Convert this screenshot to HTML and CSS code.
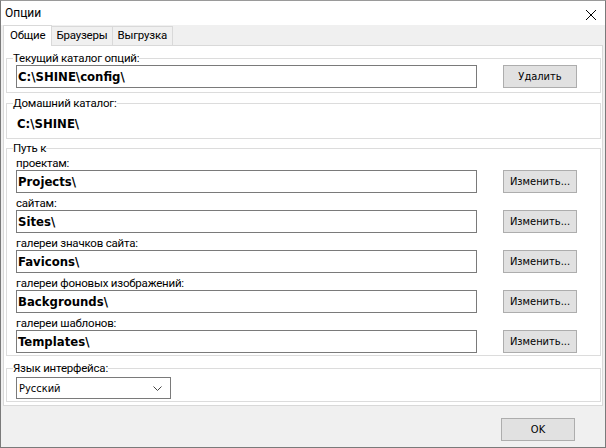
FILE: index.html
```html
<!DOCTYPE html>
<html lang="ru">
<head>
<meta charset="utf-8">
<title>Опции</title>
<link rel="stylesheet" href="styles.css">
</head>
<body>
<div class="window">
  <div class="titlebar">
    <span class="title">Опции</span>
    <svg class="close" width="12" height="12" viewBox="0 0 12 12"><path d="M1 1 L11 11 M11 1 L1 11" stroke="#000" stroke-width="1" fill="none"/></svg>
  </div>
  <div class="tabs">
    <div class="tab active">Общие</div>
    <div class="tab">Браузеры</div>
    <div class="tab">Выгрузка</div>
  </div>
  <div class="panel">
    <fieldset class="group g-current">
      <legend>Текущий каталог опций:</legend>
      <div class="row">
        <div class="field">C:\SHINE\config\</div>
        <button class="btn">Удалить</button>
      </div>
    </fieldset>
    <fieldset class="group g-home">
      <legend>Домашний каталог:</legend>
      <div class="static">C:\SHINE\</div>
    </fieldset>
    <fieldset class="group g-paths">
      <legend>Путь к</legend>
      <div class="label">проектам:</div>
      <div class="row"><div class="field">Projects\</div><button class="btn">Изменить...</button></div>
      <div class="label">сайтам:</div>
      <div class="row"><div class="field">Sites\</div><button class="btn">Изменить...</button></div>
      <div class="label">галереи значков сайта:</div>
      <div class="row"><div class="field">Favicons\</div><button class="btn">Изменить...</button></div>
      <div class="label">галереи фоновых изображений:</div>
      <div class="row"><div class="field">Backgrounds\</div><button class="btn">Изменить...</button></div>
      <div class="label">галереи шаблонов:</div>
      <div class="row"><div class="field">Templates\</div><button class="btn">Изменить...</button></div>
    </fieldset>
    <fieldset class="group g-lang">
      <legend>Язык интерфейса:</legend>
      <div class="select">
        <span>Русский</span>
        <svg width="9" height="5" viewBox="0 0 9 5"><path d="M0.5 0.5 L4.5 4.5 L8.5 0.5" stroke="#444" stroke-width="1" fill="none"/></svg>
      </div>
    </fieldset>
  </div>
  <div class="footer">
    <button class="btn ok">OK</button>
  </div>
</div>
</body>
</html>
```
FILE: styles.css
```css
html, body {
  margin: 0;
  padding: 0;
  background: #f0f0f0;
}
.window {
  width: 606px;
  height: 448px;
  box-sizing: border-box;
  border: 1px solid #7a7a7a;
  border-top-color: #9a9a9a;
  display: flex;
  flex-direction: column;
  background: #f0f0f0;
  font-family: Roboto, "Noto Sans", sans-serif;
  font-size: 11.5px;
  letter-spacing: -0.2px;
  color: #000;
}
.titlebar {
  height: 24px;
  background: #fff;
  display: flex;
  align-items: center;
  justify-content: space-between;
  padding: 0 8px 0 4px;
  flex: none;
}
.title {
  font-size: 12px;
  letter-spacing: 0;
}
.close {
  margin-top: 4px;
}
.tabs {
  display: flex;
  align-items: flex-end;
  height: 20px;
  padding-left: 2px;
  flex: none;
  position: relative;
  z-index: 1;
}
.tab {
  height: 18px;
  line-height: 17px;
  padding: 0 5px 0 4px;
  border: 1px solid #d9d9d9;
  border-bottom: none;
  background: #f0f0f0;
  margin-left: -1px;
}
.tab.active {
  height: 20px;
  background: #fff;
  margin-bottom: -1px;
  padding: 0 6px;
  margin-left: 0;
  line-height: 19px;
}
.panel {
  flex: none;
  height: 361px;
  box-sizing: border-box;
  margin: 0 2px;
  border: 1px solid #d9d9d9;
  background: #fff;
  padding: 6px 1px 0 2px;
  display: flex;
  flex-direction: column;
  gap: 1px;
}
.group {
  margin: 0;
  min-width: 0;
  border: 1px solid #dcdcdc;
  padding: 0 0 0 9px;
}
.group legend {
  padding: 0;
  margin-left: -3px;
  line-height: 12px;
}
.g-current {
  padding-top: 1px;
  padding-bottom: 4px;
}
.g-home {
  height: 42px;
  box-sizing: border-box;
  margin-top: 3px;
}
.g-paths {
  margin-top: 2px;
  padding-bottom: 2px;
  padding-left: 9px;
}
.g-lang {
  margin-top: 5px;
  padding-top: 3px;
  padding-bottom: 1px;
}
.row {
  display: flex;
  align-items: center;
}
.field {
  width: 461px;
  height: 23px;
  box-sizing: border-box;
  border: 1px solid #7a7a7a;
  padding: 0 1px;
  font-family: "DejaVu Sans Condensed", "DejaVu Sans", sans-serif;
  font-stretch: condensed;
  font-weight: bold;
  font-size: 13px;
  letter-spacing: 0;
  line-height: 21px;
}
.static {
  font-family: "DejaVu Sans Condensed", "DejaVu Sans", sans-serif;
  font-stretch: condensed;
  font-weight: bold;
  font-size: 13px;
  letter-spacing: 0;
  line-height: 16px;
  padding: 7px 0 0 1px;
}
.label {
  margin-top: 3px;
  line-height: 14px;
}
.g-paths .label:first-of-type {
  margin-top: 2px;
}
.btn {
  width: 74px;
  height: 23px;
  margin-left: 26px;
  box-sizing: border-box;
  border: 1px solid #adadad;
  background: #e1e1e1;
  font-family: "DejaVu Sans Condensed", "DejaVu Sans", sans-serif;
  font-stretch: condensed;
  font-size: 11px;
  letter-spacing: 0;
  padding: 0;
  color: #000;
}
.select {
  width: 155px;
  height: 22px;
  box-sizing: border-box;
  border: 1px solid #7a7a7a;
  display: flex;
  align-items: center;
  justify-content: space-between;
  padding: 0 8px 0 2px;
  font-family: "DejaVu Sans Condensed", "DejaVu Sans", sans-serif;
  font-stretch: condensed;
  font-size: 11px;
  letter-spacing: 0;
  margin-bottom: 1px;
}
.footer {
  flex: 1;
  display: flex;
  justify-content: flex-end;
  align-items: flex-start;
  padding: 12px 30px 0 0;
}
.ok {
  margin-left: 0;
}
```
